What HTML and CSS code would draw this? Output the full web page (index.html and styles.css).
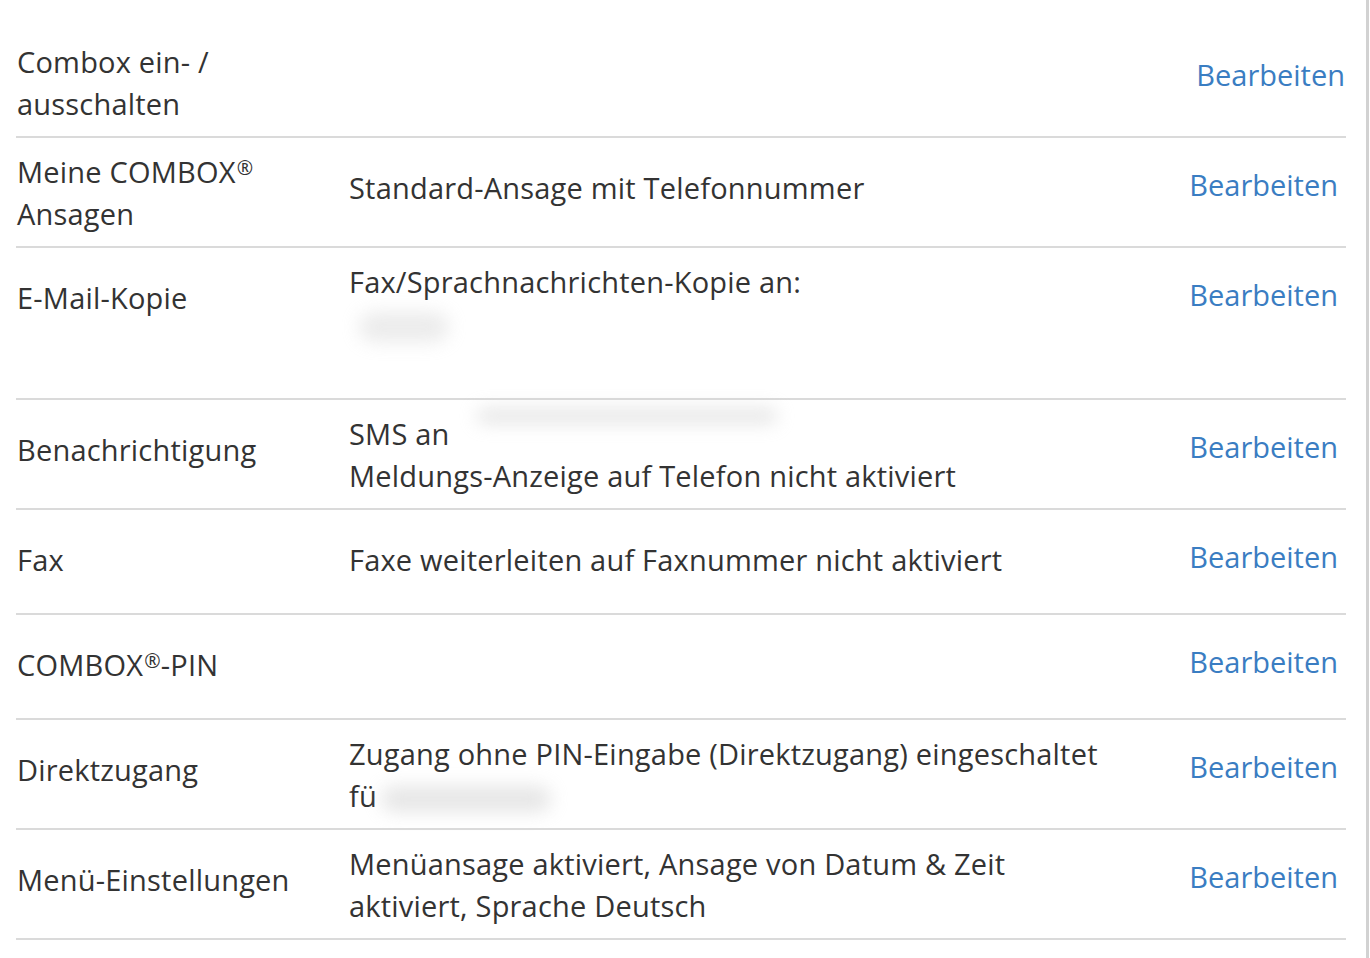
FILE: index.html
```html
<!DOCTYPE html>
<html lang="de">
<head>
<meta charset="utf-8">
<title>COMBOX Einstellungen</title>
<link rel="stylesheet" href="styles.css">
</head>
<body>
<div class="panel">
  <div class="list">
    <div class="row row-first">
      <div class="cell label">Combox ein- /<br>ausschalten</div>
      <div class="cell desc"></div>
      <div class="cell action"><a class="link" href="#">Bearbeiten</a></div>
    </div>
    <div class="row">
      <div class="cell label">Meine COMBOX<span class="reg">®</span><br>Ansagen</div>
      <div class="cell desc">Standard-Ansage mit Telefonnummer</div>
      <div class="cell action"><a class="link" href="#">Bearbeiten</a></div>
    </div>
    <div class="row">
      <div class="cell label">E-Mail-Kopie</div>
      <div class="cell desc top">Fax/Sprachnachrichten-Kopie an:<br><span class="blur blur-mail"></span><br>&nbsp;</div>
      <div class="cell action"><a class="link" href="#">Bearbeiten</a></div>
    </div>
    <div class="row">
      <div class="cell label">Benachrichtigung</div>
      <div class="cell desc top">SMS an <span class="blur blur-sms"></span><br>Meldungs-Anzeige auf Telefon nicht aktiviert</div>
      <div class="cell action"><a class="link" href="#">Bearbeiten</a></div>
    </div>
    <div class="row">
      <div class="cell label">Fax</div>
      <div class="cell desc">Faxe weiterleiten auf Faxnummer nicht aktiviert</div>
      <div class="cell action"><a class="link" href="#">Bearbeiten</a></div>
    </div>
    <div class="row">
      <div class="cell label">COMBOX<span class="reg">®</span>-PIN</div>
      <div class="cell desc"></div>
      <div class="cell action"><a class="link" href="#">Bearbeiten</a></div>
    </div>
    <div class="row">
      <div class="cell label">Direktzugang</div>
      <div class="cell desc top">Zugang ohne PIN-Eingabe (Direktzugang) eingeschaltet<br>fü<span class="blur blur-num"></span></div>
      <div class="cell action"><a class="link" href="#">Bearbeiten</a></div>
    </div>
    <div class="row">
      <div class="cell label">Menü-Einstellungen</div>
      <div class="cell desc top">Menüansage aktiviert, Ansage von Datum &amp; Zeit<br>aktiviert, Sprache Deutsch</div>
      <div class="cell action"><a class="link" href="#">Bearbeiten</a></div>
    </div>
  </div>
</div>
</body>
</html>
```
FILE: styles.css
```css
html, body {
  margin: 0;
  padding: 0;
  background: #ffffff;
}

body {
  font-family: "Open Sans", "Noto Sans", sans-serif;
  font-size: 29px;
  line-height: 42px;
  color: #333333;
}

.panel {
  width: 1369px;
  min-height: 958px;
  border-right: 3px solid #d2d2d2;
  box-sizing: border-box;
  padding: 28px 20px 0 16px;
}

.list {
  display: flex;
  flex-direction: column;
}

.row {
  display: grid;
  grid-template-columns: 333px 1fr auto;
  align-items: start;
  min-height: 105px;
  box-sizing: border-box;
  padding: 13px 0 11px;
  border-bottom: 2px solid #dadada;
}

.cell {
  min-height: 74px;
  display: flex;
  align-items: center;
  box-sizing: border-box;
}

.label,
.desc {
  letter-spacing: 0.2px;
}

.label {
  padding-left: 1px;
}

.label.cell {
  display: block;
  padding-top: 16px;
}

.row-first .label.cell,
.row:nth-child(2) .label.cell {
  padding-top: 0;
}

.reg {
  font-size: 0.68em;
  line-height: 0;
  vertical-align: 0.42em;
  margin-left: 1px;
}

.desc.top {
  display: block;
}

.action {
  justify-content: flex-end;
  padding-right: 8px;
  padding-bottom: 7px;
}

.link {
  color: #3a7dc2;
  text-decoration: none;
}

.row-first .action {
  padding-right: 1px;
}

.blur {
  display: inline-block;
  vertical-align: middle;
  background: #c8c8c8;
  filter: blur(9px);
  opacity: 0.5;
  border-radius: 20px;
}

.blur-mail {
  width: 90px;
  height: 30px;
  margin-left: 10px;
  opacity: 0.35;
}

.blur-sms {
  width: 300px;
  height: 14px;
  margin-left: 20px;
  vertical-align: top;
  margin-top: -4px;
}

.blur-num {
  width: 170px;
  height: 26px;
  margin-left: 4px;
  opacity: 0.45;
}
```
